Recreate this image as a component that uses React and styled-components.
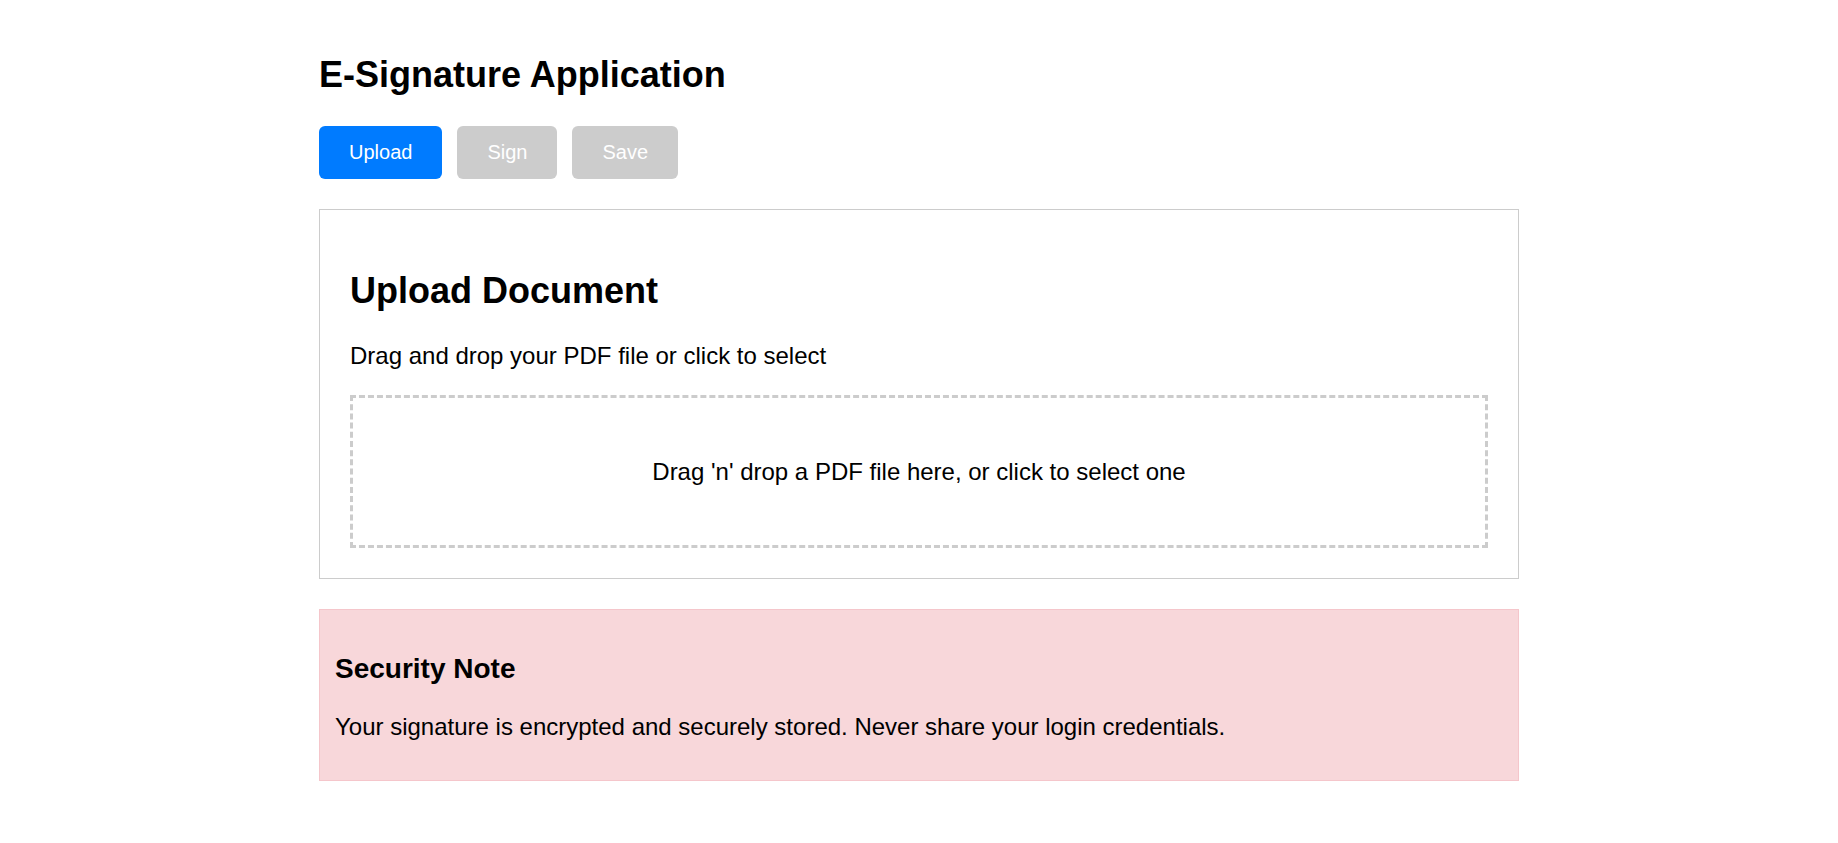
import React from "react";
import styled, { createGlobalStyle } from "styled-components";

const GlobalStyle = createGlobalStyle`
  html, body {
    margin: 0;
    padding: 0;
    background: #ffffff;
  }
  body {
    font-family: "Liberation Sans", Arial, Helvetica, sans-serif;
    color: #000000;
  }
  * { box-sizing: border-box; }
`;

const Page = styled.div`
  max-width: 1200px;
  margin: 0 auto;
  padding: 54px 0 40px;
`;

const Title = styled.h1`
  margin: 0 0 30px;
  font-size: 36px;
  font-weight: 700;
  line-height: normal;
`;

const Toolbar = styled.div`
  display: flex;
  gap: 15px;
  margin-bottom: 30px;
`;

const ActionButton = styled.button`
  padding: 15px 30px;
  border: none;
  border-radius: 6px;
  font-family: inherit;
  font-size: 20px;
  line-height: 23px;
  color: #ffffff;
  background: ${(p) => (p.$active ? "#007bff" : "#cccccc")};
  cursor: ${(p) => (p.$active ? "pointer" : "not-allowed")};
`;

const Card = styled.section`
  border: 1px solid #cccccc;
  padding: 30px;
  background: #ffffff;
`;

const CardHeading = styled.h2`
  margin: 30px 0 30px;
  font-size: 36px;
  font-weight: 700;
  line-height: normal;
`;

const Hint = styled.p`
  margin: 0 0 25px;
  font-size: 24px;
  line-height: normal;
`;

const DropZone = styled.div`
  border: 3px dashed #cccccc;
  padding: 59.5px 20px;
  text-align: center;
  font-size: 24px;
  line-height: normal;
  cursor: pointer;
`;

const Notice = styled.aside`
  margin-top: 30px;
  padding: 15px;
  background: #f8d7da;
  border: 1px solid #f5c6cb;
`;

const NoticeHeading = styled.h3`
  margin: 28px 0;
  font-size: 28px;
  font-weight: 700;
  line-height: normal;
`;

const NoticeText = styled.p`
  margin: 24px 0;
  font-size: 24px;
  line-height: normal;
`;

export default function App() {
  return (
    <>
      <GlobalStyle />
      <Page>
        <Title>E-Signature Application</Title>
        <Toolbar>
          <ActionButton $active>Upload</ActionButton>
          <ActionButton disabled>Sign</ActionButton>
          <ActionButton disabled>Save</ActionButton>
        </Toolbar>
        <Card>
          <CardHeading>Upload Document</CardHeading>
          <Hint>Drag and drop your PDF file or click to select</Hint>
          <DropZone>Drag 'n' drop a PDF file here, or click to select one</DropZone>
        </Card>
        <Notice>
          <NoticeHeading>Security Note</NoticeHeading>
          <NoticeText>
            Your signature is encrypted and securely stored. Never share your login credentials.
          </NoticeText>
        </Notice>
      </Page>
    </>
  );
}
